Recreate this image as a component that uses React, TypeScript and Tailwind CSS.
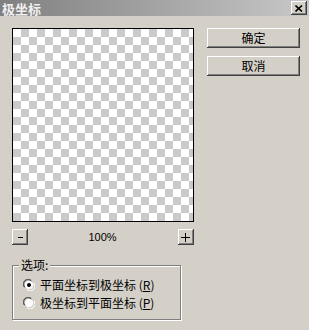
import React from "react";

const font = { fontFamily: '"SimSun", "Noto Sans CJK SC", sans-serif' };

const raised =
  "bg-[#d4d0c8] shadow-[inset_-1px_-1px_#404040,inset_1px_1px_#ffffff,inset_-2px_-2px_#808080,inset_2px_2px_#d4d0c8]";

function Radio({ checked }: { checked?: boolean }) {
  return (
    <svg width="12" height="12" viewBox="0 0 12 12" className="shrink-0">
      <path d="M1 8 A5 5 0 0 1 8 1" stroke="#808080" strokeWidth="1" fill="none" />
      <path d="M2 8.5 A4 4 0 0 1 8.5 2" stroke="#404040" strokeWidth="1" fill="none" />
      <circle cx="6" cy="6" r="4" fill="#ffffff" />
      <path d="M11 4 A5 5 0 0 1 4 11" stroke="#ffffff" strokeWidth="1" fill="none" />
      {checked && <circle cx="6" cy="6" r="2" fill="#000" />}
    </svg>
  );
}

export default function App() {
  return (
    <div className="w-[309px] h-[330px] bg-[#d4d0c8] text-black text-[12px] overflow-hidden" style={font}>
      <div className="h-[16px] flex items-center justify-between bg-gradient-to-r from-[#808080] to-[#c8c8c8] pl-[2px] pr-[2px]">
        <span className="text-[#f0f0f0] font-bold text-[13px] leading-none">极坐标</span>
        <div className={`${raised} w-[16px] h-[14px] flex items-center justify-center`}>
          <svg width="8" height="7" viewBox="0 0 8 7">
            <path d="M0.5 0.5 L7 6.5 M7 0.5 L0.5 6.5" stroke="#000" strokeWidth="1.6" />
          </svg>
        </div>
      </div>

      <div className="flex pt-[12px] pl-[12px]">
        <div className="flex flex-col w-[182px]">
          <div className="w-[182px] h-[194px] border border-black bg-[conic-gradient(#cacaca_25%,#ffffff_0_50%,#cacaca_0_75%,#ffffff_0)] bg-[length:16px_16px]" />
          <div className="flex items-center justify-between mt-[7px] h-[16px]">
            <div className={`${raised} w-[16px] h-[16px] flex items-center justify-center`}>
              <div className="w-[5px] h-[1px] bg-black" />
            </div>
            <span className="leading-none pr-[1px]" style={{ fontFamily: '"Liberation Sans", sans-serif', fontSize: 11 }}>100%</span>
            <div className={`${raised} w-[16px] h-[16px] flex items-center justify-center`}>
              <svg width="9" height="9" viewBox="0 0 9 9">
                <path d="M4.5 0 V9 M0 4.5 H9" stroke="#000" strokeWidth="1" />
              </svg>
            </div>
          </div>
        </div>

        <div className="flex flex-col gap-[8px] ml-[13px]">
          <button className={`${raised} w-[93px] h-[20px] flex items-center justify-center leading-none`}>确定</button>
          <button className={`${raised} w-[93px] h-[20px] flex items-center justify-center leading-none`}>取消</button>
        </div>
      </div>

      <div className="relative ml-[12px] mt-[20px] w-[169px] h-[55px] border border-[#808080] shadow-[1px_1px_0_#ffffff,inset_1px_1px_0_#ffffff] pt-[13px] pl-[10px] flex flex-col gap-[6px]">
        <span className="absolute -top-[8px] left-[6px] px-[2px] bg-[#d4d0c8] leading-[14px]">选项:</span>
        <label className="flex items-center gap-[5px] leading-none h-[12px]">
          <Radio checked />
          <span>平面坐标到极坐标 (<u>R</u>)</span>
        </label>
        <label className="flex items-center gap-[5px] leading-none h-[12px]">
          <Radio />
          <span>极坐标到平面坐标 (<u>P</u>)</span>
        </label>
      </div>
    </div>
  );
}
